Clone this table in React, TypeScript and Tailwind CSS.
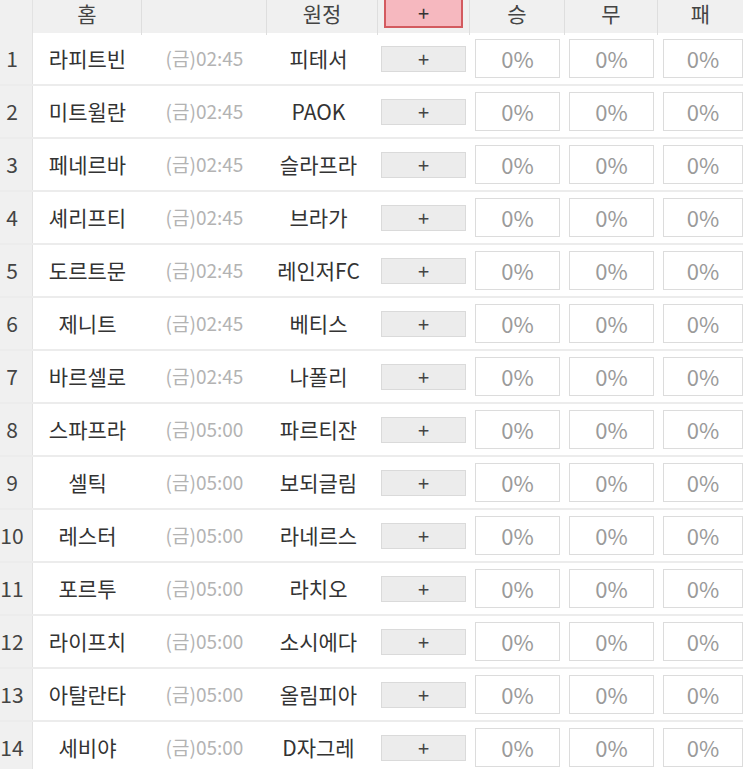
const rows = [
  { home: '라피트빈', time: '02:45', away: '피테서' },
  { home: '미트윌란', time: '02:45', away: 'PAOK' },
  { home: '페네르바', time: '02:45', away: '슬라프라' },
  { home: '셰리프티', time: '02:45', away: '브라가' },
  { home: '도르트문', time: '02:45', away: '레인저FC' },
  { home: '제니트', time: '02:45', away: '베티스' },
  { home: '바르셀로', time: '02:45', away: '나폴리' },
  { home: '스파프라', time: '05:00', away: '파르티잔' },
  { home: '셀틱', time: '05:00', away: '보되글림' },
  { home: '레스터', time: '05:00', away: '라네르스' },
  { home: '포르투', time: '05:00', away: '라치오' },
  { home: '라이프치', time: '05:00', away: '소시에다' },
  { home: '아탈란타', time: '05:00', away: '올림피아' },
  { home: '세비야', time: '05:00', away: 'D자그레' },
];

const cols = 'grid grid-cols-[33px_109px_125px_111px_92px_95px_93px_85px]';

function Pct() {
  return (
    <div className="flex items-center justify-center h-[39px] border border-[#dcdcdc] bg-white text-[22px] text-[#9a9a9a]">
      0%
    </div>
  );
}

export default function App() {
  return (
    <div
      className="w-[743px] h-[769px] overflow-hidden bg-white text-[#333]"
      style={{ fontFamily: '"Noto Sans CJK KR", "Noto Sans", sans-serif' }}
    >
      {/* Header */}
      <div className={`${cols} h-[33px] bg-[#f0f0f0] text-[21px] text-[#444] leading-[26px]`}>
        <div className="border-r border-[#e2e2e2]" />
        <div className="flex justify-center border-r border-[#dedede]">홈</div>
        <div className="border-r border-[#dedede]" />
        <div className="flex justify-center border-r border-[#dedede]">원정</div>
        <div className="px-[6px] pb-[7px] border-r border-[#dedede]">
          <div className="flex items-center justify-center h-full bg-[#f6b8bf] border-2 border-t-0 border-[#d35a5f] text-[20px] text-[#333]">
            +
          </div>
        </div>
        <div className="flex justify-center border-r border-[#dedede]">승</div>
        <div className="flex justify-center border-r border-[#dedede]">무</div>
        <div className="flex justify-center">패</div>
      </div>

      {/* Rows */}
      {rows.map((r, i) => (
        <div key={i} className={`${cols} h-[53px] border-b-2 border-[#ececec]`}>
          <div className="flex items-center justify-center pr-[8px] bg-[#f0f0f0] border-r border-[#e2e2e2] text-[21px] text-[#444]">
            {i + 1}
          </div>
          <div className="flex items-center justify-center text-[21px]">{r.home}</div>
          <div className="flex items-center justify-center text-[19px] text-[#b3b3b3]">
            (금){r.time}
          </div>
          <div className="flex items-center justify-center pr-[8px] text-[21px]">{r.away}</div>
          <div className="flex items-center pl-[3px] pr-[4px]">
            <div className="flex items-center justify-center w-full h-[26px] bg-[#ececec] border border-[#dadada] text-[20px] text-[#444]">
              +
            </div>
          </div>
          <div className="flex flex-col justify-center pl-[5px] pr-[5px]">
            <Pct />
          </div>
          <div className="flex flex-col justify-center pl-[4px] pr-[4px]">
            <Pct />
          </div>
          <div className="flex flex-col justify-center pl-[5px] pr-0">
            <Pct />
          </div>
        </div>
      ))}
    </div>
  );
}
